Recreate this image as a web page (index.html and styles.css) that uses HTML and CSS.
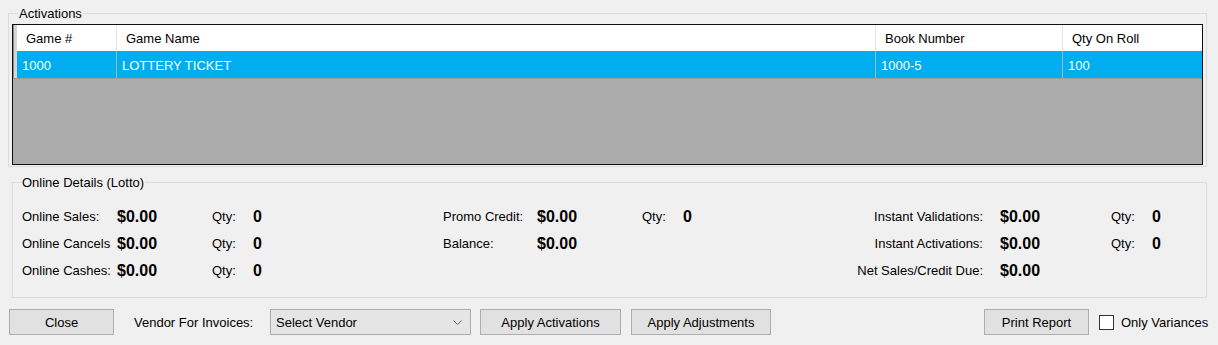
FILE: index.html
```html
<!DOCTYPE html>
<html lang="en">
<head>
    <meta charset="UTF-8">
    <title>Activations</title>
    <link rel="stylesheet" href="styles.css">
</head>
<body>

<div class="window">
    <fieldset class="group group-activations">
        <legend>Activations</legend>
        <div class="grid">
            <div class="grid-row grid-head">
                <span class="stub"></span>
                <span class="cell">Game #</span>
                <span class="cell">Game Name</span>
                <span class="cell">Book Number</span>
                <span class="cell">Qty On Roll</span>
            </div>
            <div class="grid-row grid-selected">
                <span class="stub"></span>
                <span class="cell">1000</span>
                <span class="cell">LOTTERY TICKET</span>
                <span class="cell">1000-5</span>
                <span class="cell">100</span>
            </div>
        </div>
    </fieldset>

    <fieldset class="group group-details">
        <legend>Online Details (Lotto)</legend>
        <div class="details">
            <div class="detail-set set-online">
                <span class="lbl">Online Sales:</span><strong class="val">$0.00</strong><span class="lbl">Qty:</span><strong class="val">0</strong>
                <span class="lbl">Online Cancels</span><strong class="val">$0.00</strong><span class="lbl">Qty:</span><strong class="val">0</strong>
                <span class="lbl">Online Cashes:</span><strong class="val">$0.00</strong><span class="lbl">Qty:</span><strong class="val">0</strong>
            </div>
            <div class="detail-set set-promo">
                <span class="lbl">Promo Credit:</span><strong class="val">$0.00</strong><span class="lbl">Qty:</span><strong class="val">0</strong>
                <span class="lbl">Balance:</span><strong class="val">$0.00</strong><span></span><span></span>
            </div>
            <div class="detail-set set-instant">
                <span class="lbl">Instant Validations:</span><strong class="val">$0.00</strong><span class="lbl">Qty:</span><strong class="val">0</strong>
                <span class="lbl">Instant Activations:</span><strong class="val">$0.00</strong><span class="lbl">Qty:</span><strong class="val">0</strong>
                <span class="lbl">Net Sales/Credit Due:</span><strong class="val">$0.00</strong><span></span><span></span>
            </div>
        </div>
    </fieldset>

    <div class="actions">
        <button class="btn btn-close">Close</button>
        <span class="vendor-label">Vendor For Invoices:</span>
        <div class="combo">
            <span>Select Vendor</span>
            <svg class="chevron" width="9" height="5" viewBox="0 0 9 5"><polyline points="0.5,0.5 4.5,4.5 8.5,0.5" fill="none" stroke="#606060" stroke-width="1"/></svg>
        </div>
        <button class="btn btn-activations">Apply Activations</button>
        <button class="btn btn-adjustments">Apply Adjustments</button>
        <button class="btn btn-print">Print Report</button>
        <label class="check">
            <span class="box"></span>
            Only Variances
        </label>
    </div>
</div>

</body>
</html>
```

FILE: styles.css
```css
body {
    margin: 0;
    padding: 0;
    background: #f0f0f0;
    font-family: 'Liberation Sans', Arial, sans-serif;
    font-size: 13px;
    color: #000;
}

.window {
    padding-top: 6px;
}

.group {
    border: 1px solid #dcdcdc;
    min-width: 0;
}

.group legend {
    font-size: 13px;
    line-height: 14px;
    padding: 1px 1px 0;
}

.group-activations {
    margin: 0 11px 0 8px;
    padding: 3px 3px 1px;
}

.group-activations legend {
    margin-left: 6px;
}

.grid {
    height: 139px;
    border: 1px solid #101010;
    background: #ababab;
}

.grid-row {
    display: grid;
    grid-template-columns: 4px 100px 759px 187px 1fr;
}

.grid-head {
    height: 26px;
    background: #fff;
}

.grid-head .cell {
    padding: 1px 0 0 9px;
    border-right: 1px solid #e3e3e3;
}

.grid-selected {
    height: 27px;
    background: #00adef;
    color: #fff;
    border-bottom: 1px solid #9a9a9a;
}

.grid-selected .cell {
    padding: 2px 0 0 5px;
    border-right: 1px solid #9fb8c8;
}

.cell {
    display: flex;
    align-items: center;
    white-space: nowrap;
    overflow: hidden;
}

.cell:last-child {
    border-right: none;
}

.stub {
    background: #d6d6d6;
    border-left: 1px solid #8c8c8c;
}

.group-details {
    margin: 8px 11px 0 12px;
    padding: 13px 9px 13px;
}

.group-details legend {
    margin-left: -1px;
}

.details {
    display: flex;
}

.detail-set {
    display: grid;
    grid-auto-rows: 27px;
    align-items: center;
}

.set-online {
    width: 421px;
    grid-template-columns: 95px 95px 41px auto;
}

.set-promo {
    width: 400px;
    grid-template-columns: 94px 105px 41px auto;
}

.set-instant {
    flex: 1;
    grid-template-columns: 157px 111px 41px auto;
}

.set-instant .lbl:nth-child(4n+1) {
    text-align: right;
    padding-right: 17px;
}

.lbl {
    white-space: nowrap;
}

.val {
    font-size: 16px;
    font-weight: bold;
    line-height: 1;
}

.actions {
    display: flex;
    align-items: center;
    margin: 11px 0 0 9px;
}

.btn {
    height: 26px;
    background: #e1e1e1;
    border: 1px solid #adadad;
    font-family: inherit;
    font-size: 13px;
    color: #000;
    padding: 1px 0 0;
}

.btn-close {
    width: 105px;
    margin-right: 20px;
}

.vendor-label {
    width: 136px;
    white-space: nowrap;
}

.combo {
    width: 201px;
    height: 26px;
    box-sizing: border-box;
    border: 1px solid #adadad;
    background: #e5e5e5;
    display: flex;
    align-items: center;
    justify-content: space-between;
    padding: 1px 8px 0 5px;
    margin-right: 9px;
}

.btn-activations {
    width: 141px;
    margin-right: 10px;
}

.btn-adjustments {
    width: 140px;
}

.btn-print {
    width: 105px;
    margin-left: 213px;
}

.check {
    display: flex;
    align-items: center;
    margin-left: 10px;
    white-space: nowrap;
}

.box {
    width: 13px;
    height: 13px;
    background: #fff;
    border: 1px solid #333;
    margin-right: 7px;
}
```
